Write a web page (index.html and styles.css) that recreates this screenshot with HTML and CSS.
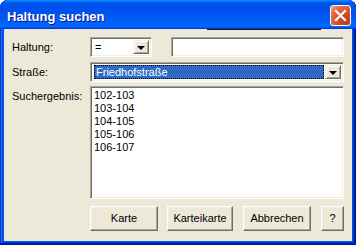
FILE: index.html
```html
<!DOCTYPE html>
<html lang="de">
<head>
<meta charset="utf-8">
<title>Haltung suchen</title>
<link rel="stylesheet" href="styles.css">
</head>
<body>
<div class="window">
  <div class="titlebar">
    <span class="title">Haltung suchen</span>
    <div class="close">
      <svg width="13" height="13" viewBox="0 0 13 13"><path d="M2 2 L11 11 M11 2 L2 11" stroke="#fff" stroke-width="2.2" stroke-linecap="square"/></svg>
    </div>
  </div>
  <div class="client">
    <div class="topline"></div>
    <div class="row row-haltung">
      <label class="label">Haltung:</label>
      <div class="combo combo-op">
        <span class="combo-text">=</span>
        <span class="drop"><span class="arrow"></span></span>
      </div>
      <div class="field text-input"></div>
    </div>
    <div class="row row-strasse">
      <label class="label">Straße:</label>
      <div class="combo combo-street">
        <span class="combo-text selected">Friedhofstraße</span>
        <span class="drop"><span class="arrow"></span></span>
      </div>
    </div>
    <div class="row row-result">
      <label class="label label-top">Suchergebnis:</label>
      <div class="field listbox">
        <div class="item">102-103</div>
        <div class="item">103-104</div>
        <div class="item">104-105</div>
        <div class="item">105-106</div>
        <div class="item">106-107</div>
      </div>
    </div>
    <div class="buttons">
      <div class="btn btn-karte">Karte</div>
      <div class="btn btn-kartei">Karteikarte</div>
      <div class="btn btn-abbr">Abbrechen</div>
      <div class="btn btn-help">?</div>
    </div>
  </div>
</div>
</body>
</html>
```
FILE: styles.css
```css
* { box-sizing: border-box; }
html, body { margin: 0; padding: 0; background: #fff; }
body {
  font-family: "Liberation Sans", Arial, sans-serif;
  font-size: 11px;
  color: #000;
}
.window {
  width: 356px;
  height: 245px;
  border-radius: 8px 8px 0 0;
  background: #0055e5;
  box-shadow: inset -1px -1px #00138c, inset 1px 1px #0831d9, inset -2px -2px #001ea0, inset 2px 2px #166aee, inset -3px -3px #003bda, inset 3px 3px #0855dd;
  padding: 0 4px 4px 4px;
  display: flex;
  flex-direction: column;
  overflow: hidden;
}
.titlebar {
  height: 29px;
  margin: 0 -4px;
  border-radius: 8px 8px 0 0;
  background: linear-gradient(to bottom, #0997ff 0%, #0053ee 10%, #0050ee 40%, #0066ff 86%, #0066ff 92%, #005bff 94%, #003dd7 97%, #003dd7 100%);
  display: flex;
  justify-content: space-between;
  align-items: flex-start;
  padding: 5px 5px 0 7px;
}
.title {
  margin-top: 5px;
  font-family: "Liberation Sans", Arial, sans-serif;
  font-weight: bold;
  font-size: 13px;
  line-height: 14px;
  color: #fff;
  text-shadow: 1px 1px #0f1089;
}
.close {
  width: 21px;
  height: 21px;
  border: 1px solid #fff;
  border-radius: 3px;
  background: radial-gradient(circle at 85% 85%, #b83a17 0%, #d8502a 45%, #e06a45 70%, #f09a7a 95%);
  display: flex;
  align-items: center;
  justify-content: center;
}
.client {
  flex: 1;
  background: #ece9d8;
  padding: 0 8px 10px 8px;
  display: flex;
  flex-direction: column;
}
.topline {
  height: 1px;
  margin-left: 195px;
  width: 114px;
  background: #1a1a1a;
  margin-bottom: 7px;
}
.row { display: flex; }
.label {
  width: 78px;
  flex: none;
  line-height: 13px;
  align-self: center;
}
.label-top { align-self: flex-start; margin-top: 4px; }
.row-haltung { height: 20px; margin-bottom: 5px; }
.row-strasse { height: 20px; margin-bottom: 4px; }
.row-result { height: 113px; margin-bottom: 7px; }

.field, .combo {
  background: #fff;
  border: 1px solid;
  border-color: #aca899 #ffffff #ffffff #aca899;
  box-shadow: inset 1px 1px #716f64, inset -1px -1px #f1efe2;
}
.combo {
  display: flex;
  align-items: stretch;
  padding: 2px;
}
.combo-op { width: 62px; }
.text-input { margin-left: 19px; flex: 1; }
.combo-street { flex: 1; }
.combo-text {
  flex: 1;
  line-height: 14px;
  padding-left: 2px;
}
.combo-text.selected {
  background: #316ac5;
  color: #fff;
  border: 1px dotted #000;
  margin: 0 1px;
  padding-left: 1px;
  line-height: 12px;
}
.drop {
  width: 16px;
  flex: none;
  background: #ece9d8;
  border: 1px solid;
  border-color: #f1efe2 #716f64 #716f64 #f1efe2;
  box-shadow: inset 1px 1px #fff, inset -1px -1px #aca899;
  display: flex;
  align-items: center;
  justify-content: center;
}
.arrow {
  width: 0;
  height: 0;
  border-left: 4px solid transparent;
  border-right: 4px solid transparent;
  border-top: 4px solid #000;
  margin-top: 1px;
}
.listbox {
  flex: 1;
  padding: 2px 3px;
}
.item { line-height: 13px; }

.buttons {
  display: flex;
  margin-left: 78px;
  height: 25px;
}
.btn {
  height: 25px;
  background: #ece9d8;
  border: 1px solid;
  border-color: #fff #716f64 #716f64 #fff;
  box-shadow: inset -1px -1px #aca899, inset 1px 1px #f1efe2;
  display: flex;
  align-items: center;
  justify-content: center;
  line-height: 13px;
}
.btn-karte { width: 68px; margin-right: 9px; }
.btn-kartei { width: 66px; margin-right: 10px; }
.btn-abbr { width: 68px; margin-right: 10px; }
.btn-help { width: 23px; }
```
